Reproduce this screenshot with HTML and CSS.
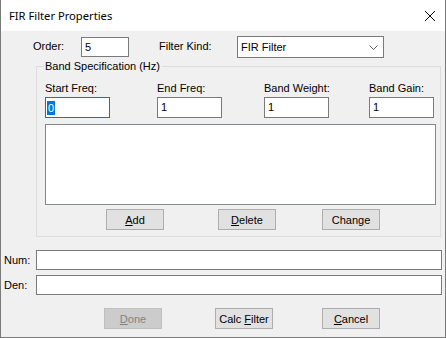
FILE: index.html
```html
<!DOCTYPE html>
<html lang="en">

<head>
  <meta charset="UTF-8">
  <title>FIR Filter Properties</title>
  <link rel="stylesheet" href="styles.css">
</head>

<body>
  <div class="window">
    <div class="titlebar">
      <span class="title">FIR Filter Properties</span>
      <svg class="close" width="12" height="12" viewBox="0 0 12 12">
        <path d="M1 1 L11 11 M11 1 L1 11" stroke="#000" stroke-width="1" fill="none" />
      </svg>
    </div>

    <div class="content">
      <div class="toprow">
        <label class="lbl-order">Order:</label>
        <div class="edit order">5</div>
        <label class="lbl-kind">Filter Kind:</label>
        <div class="combo">
          <span>FIR Filter</span>
          <svg width="9" height="5" viewBox="0 0 9 5">
            <path d="M0.5 0.5 L4.5 4.5 L8.5 0.5" stroke="#606060" stroke-width="1" fill="none" />
          </svg>
        </div>
      </div>

      <fieldset class="group">
        <legend>Band Specification (Hz)</legend>
        <div class="bands">
          <label>Start Freq:</label>
          <label>End Freq:</label>
          <label>Band Weight:</label>
          <label>Band Gain:</label>
          <div class="edit band focused"><span class="sel">0</span></div>
          <div class="edit band">1</div>
          <div class="edit band">1</div>
          <div class="edit band">1</div>
        </div>
        <div class="listbox"></div>
        <div class="band-buttons">
          <button class="btn"><u>A</u>dd</button>
          <button class="btn btn-delete"><u>D</u>elete</button>
          <button class="btn btn-change">Chan<u>g</u>e</button>
        </div>
      </fieldset>

      <div class="coef">
        <label>Num:</label>
        <div class="edit wide"></div>
      </div>
      <div class="coef den">
        <label>Den:</label>
        <div class="edit wide"></div>
      </div>

      <div class="footer">
        <button class="btn disabled" disabled><u>D</u>one</button>
        <button class="btn btn-calc">Calc <u>F</u>ilter</button>
        <button class="btn btn-cancel"><u>C</u>ancel</button>
      </div>
    </div>
  </div>
</body>

</html>
```

FILE: styles.css
```css
* {
  margin: 0px;
  padding: 0px;
  box-sizing: border-box;
}

body {
  background-color: #f0f0f0;
  font-family: "Liberation Sans", Arial, sans-serif;
  font-size: 11px;
  color: #000;
}

.window {
  width: 446px;
  height: 338px;
  border: 1px solid #7a7a7a;
  border-top: none;
  background-color: #f0f0f0;
}

.titlebar {
  height: 31px;
  background-color: white;
  display: flex;
  align-items: center;
  justify-content: space-between;
  padding: 0 9px 0 8px;
}

.title {
  font-family: "Noto Sans", sans-serif;
  font-size: 11.2px;
  color: #000;
}

.close {
  margin-top: 1px;
}

.content {
  padding-top: 5px;
}

label {
  line-height: 13px;
  white-space: nowrap;
}

.edit {
  background-color: white;
  border: 1px solid #7a7a7a;
  height: 21px;
  line-height: 19px;
  padding-left: 3px;
}

.edit.focused {
  border-color: #0078d7;
  padding-left: 1px;
}

.sel {
  display: inline-block;
  background-color: #0078d7;
  color: white;
  line-height: 14px;
  padding: 0 1px;
  vertical-align: middle;
}

/* order / filter kind */
.toprow {
  display: flex;
  align-items: center;
  height: 21px;
}

.lbl-order {
  margin-left: 32px;
  width: 48px;
}

.order {
  width: 48px;
  height: 20px;
}

.lbl-kind {
  margin-left: 30px;
  width: 78px;
}

.combo {
  width: 147px;
  height: 22px;
  background-color: white;
  border: 1px solid #7a7a7a;
  display: flex;
  align-items: center;
  justify-content: space-between;
  padding: 0 5px 0 3px;
  margin-top: 1px;
}

/* band group */
.group {
  margin: 3px 0 0 35px;
  width: 405px;
  height: 177px;
  border: 1px solid #dcdcdc;
  padding: 0 0 0 8px;
}

.group legend {
  margin-left: -1px;
  padding: 0 2px 0 1px;
  line-height: 13px;
}

.bands {
  display: grid;
  grid-template-columns: 112px 107px 105px 65px;
  row-gap: 2px;
  margin-top: 9px;
}

.band {
  width: 65px;
}

.listbox {
  margin-top: 6px;
  width: 391px;
  height: 81px;
  background-color: white;
  border: 1px solid #828790;
}

.band-buttons {
  display: flex;
  margin-top: 4px;
  padding-left: 61px;
}

.btn {
  width: 58px;
  height: 21px;
  background-color: #e1e1e1;
  border: 1px solid #adadad;
  font-family: "Liberation Sans", Arial, sans-serif;
  font-size: 11px;
  color: #000;
}

.btn-delete {
  margin-left: 54px;
}

.btn-change {
  margin-left: 46px;
}

/* coefficients */
.coef {
  display: flex;
  align-items: center;
  margin-top: 13px;
  padding-left: 3px;
}

.coef.den {
  margin-top: 5px;
}

.coef label {
  width: 32px;
}

.wide {
  width: 406px;
  height: 20px;
}

.footer {
  display: flex;
  margin-top: 13px;
  padding-left: 103px;
}

.btn.disabled {
  background-color: #cccccc;
  border-color: #bfbfbf;
  color: #838383;
}

.btn-calc {
  margin-left: 53px;
}

.btn-cancel {
  margin-left: 49px;
}
```
